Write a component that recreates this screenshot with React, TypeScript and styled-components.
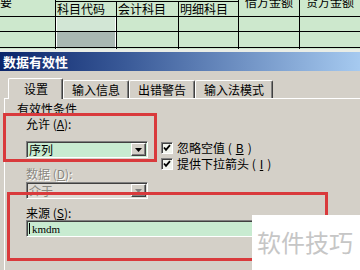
import styled, { createGlobalStyle } from "styled-components";

const GlobalStyle = createGlobalStyle`
  html, body {
    margin: 0;
    padding: 0;
  }
  body {
    width: 360px;
    height: 270px;
    overflow: hidden;
    background: #d4d0c8;
    font-family: "Noto Sans CJK SC", "Liberation Sans", sans-serif;
  }
`;

const headers = ["科目代码", "会计科目", "明细科目"];
const bodyRows = [0, 1, 2];

function DownArrow({ disabled }: { disabled?: boolean }) {
  return (
    <svg width="7" height="4" viewBox="0 0 7 4">
      <polygon points="0,0 7,0 3.5,4" fill={disabled ? "#808080" : "#000"} />
    </svg>
  );
}

function Tick() {
  return (
    <svg width="8" height="8" viewBox="0 0 8 8">
      <path d="M1 3.5 L3 5.8 L7 1.2" stroke="#000" strokeWidth="1.8" fill="none" />
    </svg>
  );
}

function App() {
  return (
    <Page>
      <GlobalStyle />
      <SheetView>
        <Sheet>
          <Cell $rows={2}>
            <Shifted>摘要</Shifted>
          </Cell>
          <Cell $cols={3} />
          <Cell $rows={2} $center>借方金额</Cell>
          <Cell $rows={2} $center>贷方金额</Cell>
          {headers.map((h) => (
            <Cell key={h}>{h}</Cell>
          ))}
          {bodyRows.map((r) =>
            [0, 1, 2, 3, 4, 5].map((c) => (
              <Cell
                key={`${r}-${c}`}
                $sel={c === 1 ? (r === 1 ? "dark" : "light") : undefined}
              />
            ))
          )}
        </Sheet>
      </SheetView>

      <Dialog>
        <TitleBar>数据有效性</TitleBar>
        <TabRow>
          <Tab $active>设置</Tab>
          <Tab>输入信息</Tab>
          <Tab>出错警告</Tab>
          <Tab>输入法模式</Tab>
        </TabRow>
        <Panel>
          <GroupTitle>有效性条件</GroupTitle>
          <Criteria>
            <LeftCol>
              <FieldLabel $top={1}>
                允许 (<u>A</u>):
              </FieldLabel>
              <Combo $top={10}>
                <ComboText>序列</ComboText>
                <DropButton>
                  <DownArrow />
                </DropButton>
              </Combo>
              <FieldLabel $top={9} $disabled>
                数据 (<u>D</u>):
              </FieldLabel>
              <Combo $top={1} $disabled>
                <ComboText $disabled>介于</ComboText>
                <DropButton>
                  <DownArrow disabled />
                </DropButton>
              </Combo>
            </LeftCol>
            <CheckGroup>
              <CheckRow>
                <CheckBox>
                  <Tick />
                </CheckBox>
                忽略空值 (<u>B</u>)
              </CheckRow>
              <CheckRow>
                <CheckBox>
                  <Tick />
                </CheckBox>
                提供下拉箭头 (<u>I</u>)
              </CheckRow>
            </CheckGroup>
          </Criteria>
          <SourceBlock>
            <FieldLabel $top={7}>
              来源 (<u>S</u>):
            </FieldLabel>
            <SourceInput>
              <Caret />
              kmdm
            </SourceInput>
          </SourceBlock>
        </Panel>
      </Dialog>

      <Highlight $left={3} $top={113} $w={154} $h={49} />
      <Highlight $left={7} $top={192} $w={321} $h={69} />
      <Watermark>软件技巧</Watermark>
    </Page>
  );
}

const Page = styled.div`
  position: relative;
  width: 360px;
  height: 270px;
  overflow: hidden;
  display: flex;
  flex-direction: column;
`;

const SheetView = styled.div`
  height: 49px;
  flex-shrink: 0;
  overflow: hidden;
  background: #000;
`;

const Sheet = styled.div`
  display: grid;
  grid-template-columns: 55px 60px 61px 59px 60px 1fr;
  grid-template-rows: 14px 14px 14px 15px 10px;
  gap: 1px;
  margin-top: -13px;
  background: #000;
`;

const Cell = styled.div<{
  $rows?: number;
  $cols?: number;
  $center?: boolean;
  $sel?: "light" | "dark";
}>`
  grid-row: span ${(p) => p.$rows || 1};
  grid-column: span ${(p) => p.$cols || 1};
  display: flex;
  align-items: center;
  justify-content: ${(p) => (p.$center ? "center" : "flex-start")};
  padding-left: ${(p) => (p.$center ? 0 : 1)}px;
  overflow: hidden;
  white-space: nowrap;
  font-size: 12px;
  line-height: 14px;
  color: #000;
  background: ${(p) =>
    p.$sel === "dark" ? "#a9b8b2" : p.$sel === "light" ? "#d2e6d5" : "#cde8cd"};
  box-shadow: ${(p) =>
    p.$sel ? "inset 1px 0 #fff, inset -1px 0 #fff" : "none"};
`;

const Shifted = styled.span`
  margin-left: -13px;
`;

const Dialog = styled.div`
  flex: 1;
  display: flex;
  flex-direction: column;
  border-top: 3px solid #e9ede6;
  background: #d4d0c8;
`;

const TitleBar = styled.div`
  height: 19px;
  padding-left: 3px;
  background: linear-gradient(to right, #0a246a 0%, #3a5a98 35%, #a6caf0 100%);
  color: #fff;
  font-size: 13px;
  font-weight: 700;
  line-height: 19px;
`;

const TabRow = styled.div`
  display: flex;
  align-items: flex-end;
  height: 20px;
  margin-top: 7px;
  padding-left: 8px;
  position: relative;
  z-index: 1;
`;

const Tab = styled.div<{ $active?: boolean }>`
  box-sizing: border-box;
  height: ${(p) => (p.$active ? 21 : 18)}px;
  margin-bottom: ${(p) => (p.$active ? -1 : 0)}px;
  padding: ${(p) => (p.$active ? "2px 14px 0 15px" : "1px 8px 0")};
  background: #d4d0c8;
  border-top: 1px solid #fff;
  border-left: 1px solid #fff;
  border-right: 1px solid #404040;
  box-shadow: inset -1px 0 #808080;
  border-radius: 2px 2px 0 0;
  font-size: 12px;
  line-height: 15px;
  color: #000;
  white-space: nowrap;
`;

const Panel = styled.div`
  flex: 1;
  margin-left: 4px;
  padding: 3px 0 0 12px;
  border-top: 1px solid #fff;
  border-left: 1px solid #fff;
`;

const GroupTitle = styled.div`
  font-size: 12px;
  line-height: 14px;
  color: #000;
`;

const Criteria = styled.div`
  display: flex;
  align-items: flex-start;
  gap: 13px;
  margin-left: 9px;
`;

const LeftCol = styled.div`
  width: 122px;
  display: flex;
  flex-direction: column;
`;

const FieldLabel = styled.div<{ $top: number; $disabled?: boolean }>`
  margin-top: ${(p) => p.$top}px;
  font-size: 12px;
  line-height: 14px;
  color: ${(p) => (p.$disabled ? "#8a8780" : "#000")};
  text-shadow: ${(p) => (p.$disabled ? "1px 1px #fff" : "none")};
  white-space: nowrap;
  u {
    text-underline-offset: 1px;
  }
`;

const Combo = styled.div<{ $top: number; $disabled?: boolean }>`
  box-sizing: border-box;
  height: 17px;
  margin-top: ${(p) => p.$top}px;
  display: flex;
  align-items: center;
  justify-content: space-between;
  padding: 0 1px 0 2px;
  background: ${(p) => (p.$disabled ? "#dedbd5" : "#c8ebd1")};
  border-top: 1px solid #808080;
  border-left: 1px solid #808080;
  border-bottom: 1px solid #fff;
  border-right: 1px solid #fff;
  box-shadow: inset 1px 1px #404040;
`;

const ComboText = styled.span<{ $disabled?: boolean }>`
  font-size: 12px;
  line-height: 14px;
  color: ${(p) => (p.$disabled ? "#8a8780" : "#000")};
`;

const DropButton = styled.div`
  box-sizing: border-box;
  width: 15px;
  height: 13px;
  display: flex;
  align-items: center;
  justify-content: center;
  background: #d4d0c8;
  border: 1px solid;
  border-color: #fff #404040 #404040 #fff;
  box-shadow: inset -1px -1px #808080;
`;

const CheckGroup = styled.div`
  margin-top: 25px;
  display: flex;
  flex-direction: column;
  gap: 2px;
`;

const CheckRow = styled.div`
  display: flex;
  align-items: center;
  gap: 4px;
  font-size: 12px;
  line-height: 14px;
  color: #000;
  white-space: nowrap;
`;

const CheckBox = styled.div`
  box-sizing: border-box;
  width: 12px;
  height: 12px;
  display: flex;
  align-items: center;
  justify-content: center;
  background: #f2f5ee;
  border-top: 1px solid #808080;
  border-left: 1px solid #808080;
  border-bottom: 1px solid #fff;
  border-right: 1px solid #fff;
  box-shadow: inset 1px 1px #404040;
`;

const SourceBlock = styled.div`
  margin-left: 9px;
`;

const SourceInput = styled.div`
  box-sizing: border-box;
  width: 294px;
  height: 17px;
  display: flex;
  align-items: center;
  gap: 2px;
  padding-left: 2px;
  background: #c8ebd1;
  border-top: 1px solid #808080;
  border-left: 1px solid #808080;
  border-bottom: 1px solid #fff;
  border-right: 1px solid #fff;
  box-shadow: inset 1px 1px #404040;
  font-family: "Liberation Serif", serif;
  font-size: 11px;
  color: #000;
`;

const Caret = styled.span`
  width: 1px;
  height: 11px;
  background: #000;
`;

const Highlight = styled.div<{ $left: number; $top: number; $w: number; $h: number }>`
  position: absolute;
  left: ${(p) => p.$left}px;
  top: ${(p) => p.$top}px;
  width: ${(p) => p.$w}px;
  height: ${(p) => p.$h}px;
  box-sizing: border-box;
  border: 3px solid #d93a3c;
  pointer-events: none;
`;

const Watermark = styled.div`
  position: absolute;
  left: 252px;
  top: 215px;
  right: 0;
  bottom: 0;
  padding: 13px 0 0 5px;
  background: #fff;
  color: #c6c6c6;
  font-size: 24px;
  line-height: 28px;
  white-space: nowrap;
`;

export default App;
